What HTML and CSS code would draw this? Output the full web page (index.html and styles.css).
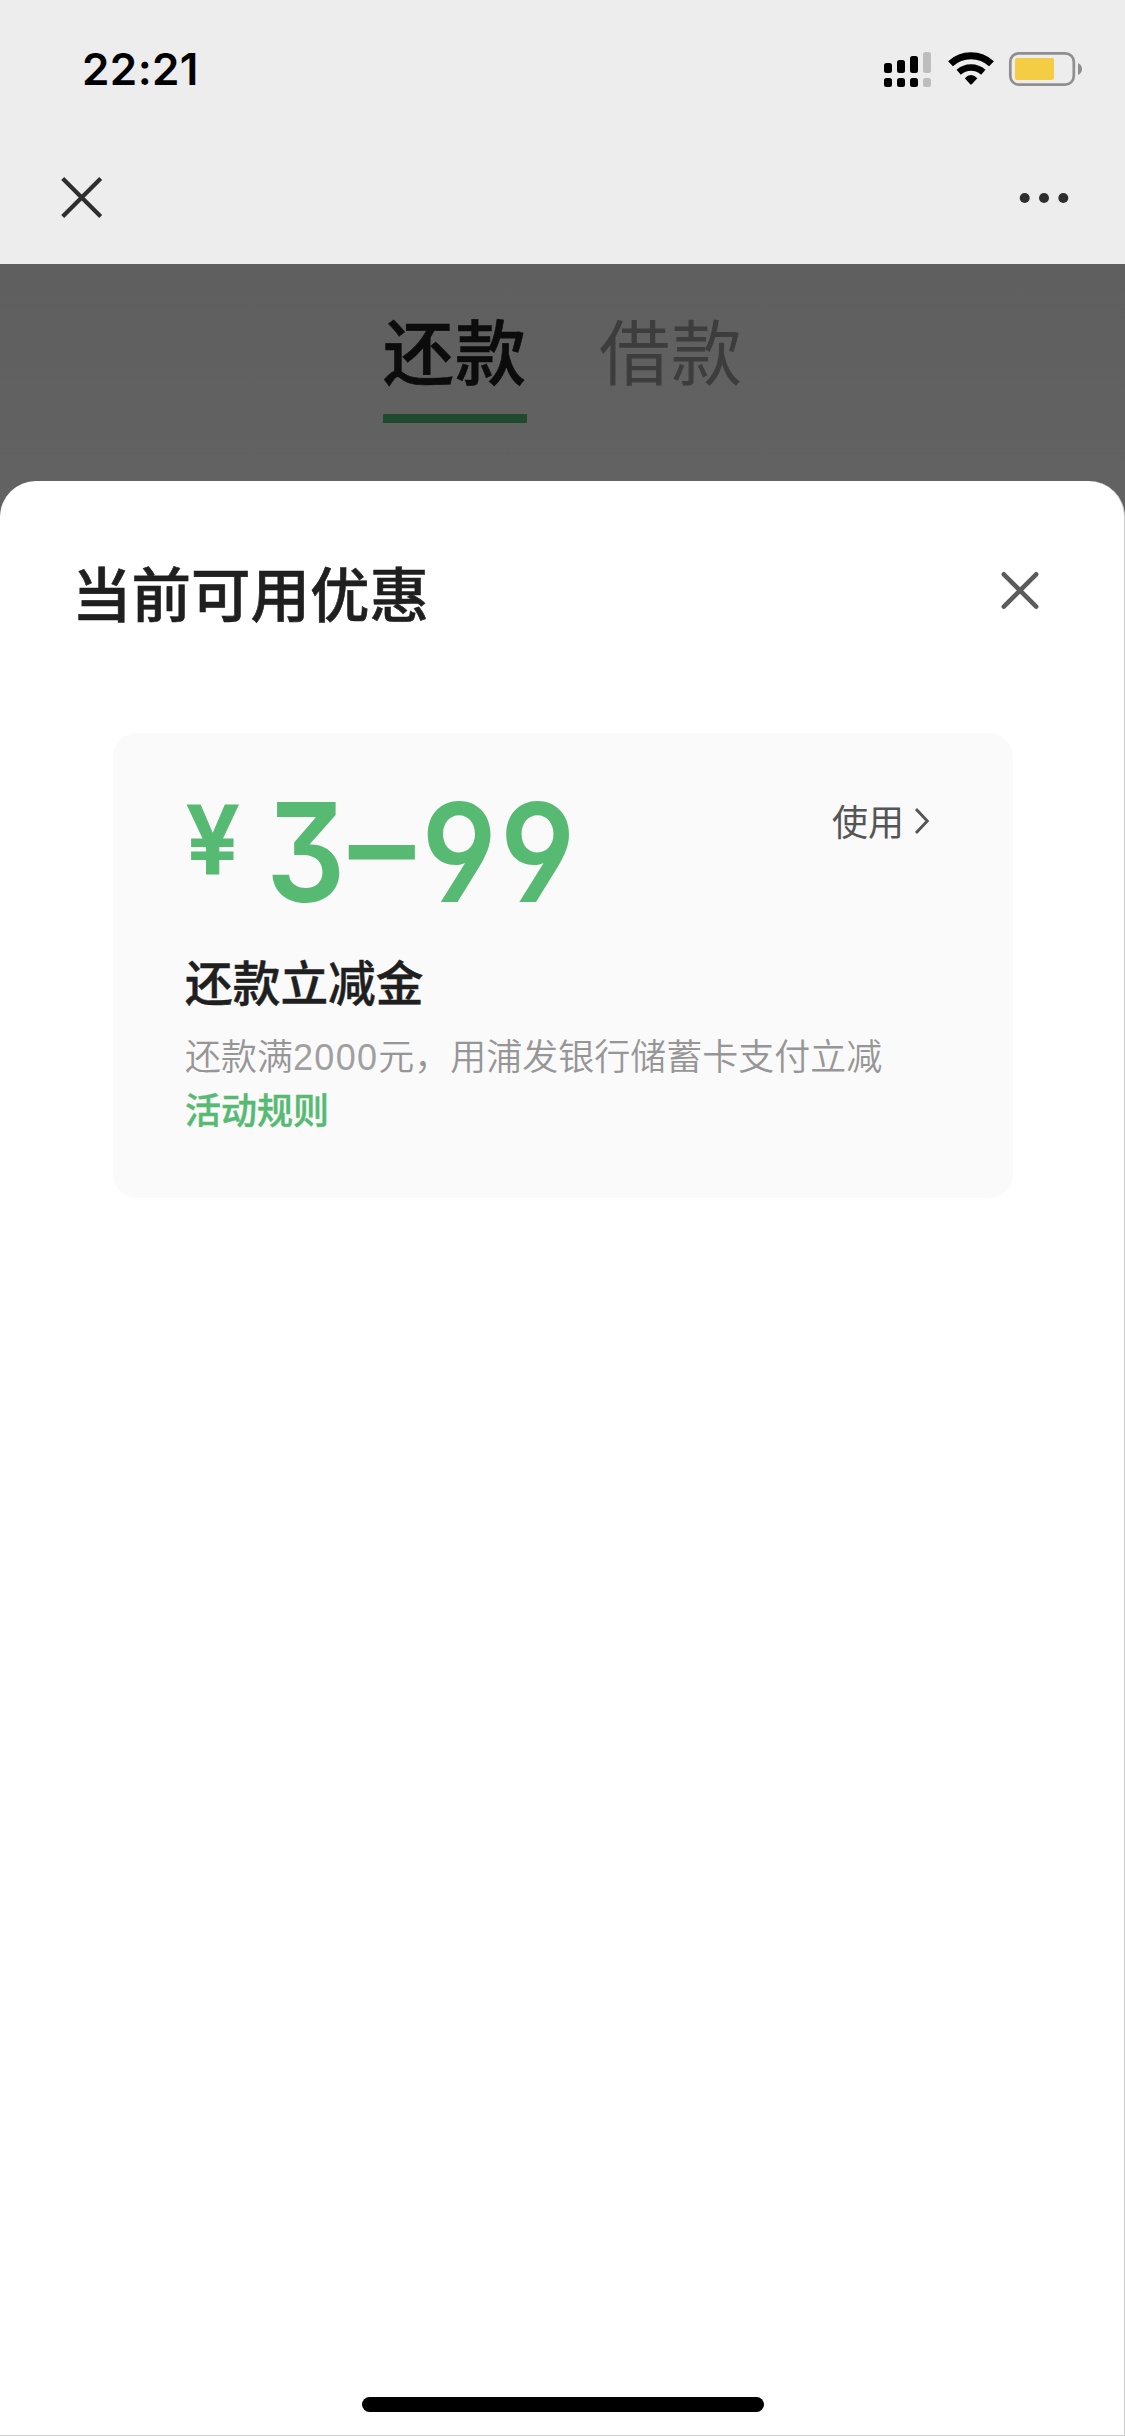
FILE: index.html
```html
<!DOCTYPE html>
<html lang="zh-CN">
<head>
<meta charset="utf-8">
<title>当前可用优惠</title>
<link rel="stylesheet" href="styles.css">
</head>
<body>
<div class="screen">
  <header class="status-bar">
    <span class="time">22:21</span>
    <svg class="status-icons" width="202" height="40" viewBox="882 50 202 40">
      <g>
        <rect x="884" y="63" width="8" height="10" rx="2.5"/>
        <rect x="897" y="60" width="8" height="13" rx="2.5"/>
        <rect x="910" y="56" width="8" height="17" rx="2.5"/>
        <rect x="884" y="78" width="8" height="9" rx="2.5"/>
        <rect x="897" y="78" width="8" height="9" rx="2.5"/>
        <rect x="910" y="78" width="8" height="9" rx="2.5"/>
        <rect x="923" y="52" width="8" height="21" rx="2.5" fill="#bdbdbd"/>
        <rect x="923" y="78" width="8" height="9" rx="2.5" fill="#bdbdbd"/>
      </g>
      <g fill="none" stroke="#000" stroke-linejoin="round">
        <path d="M950.5 63.8A30 30 0 0 1 991.5 63.8" stroke-width="7"/>
        <path d="M958.700 72.200A18.500 18.500 0 0 1 983.300 72.200" stroke-width="6.500"/>
      </g>
      <path d="M964.800 78.200Q971 72 977.300 78.200L971.800 84.200Q971 85 970.200 84.200Z"/>
      <rect x="1010.300" y="53.300" width="63.500" height="31.300" rx="8.500" fill="none" stroke="#8f8f8f" stroke-width="2.700"/>
      <rect x="1015" y="58" width="39" height="22" rx="2" fill="#f5cd45"/>
      <path d="M1078 63Q1082 65 1082 69T1078 75Z" fill="#8f8f8f"/>
    </svg>
  </header>
  <nav class="title-bar">
    <svg width="44" height="44" viewBox="0 0 44 44" fill="none" stroke="#2e2e2e" stroke-width="4.200"><path d="M2.700 2.400L40.700 40.400M40.700 2.400L2.700 40.400"/></svg>
    <svg width="50" height="12" viewBox="0 0 50 12" fill="#2e2e2e"><circle cx="5.700" cy="6" r="5"/><circle cx="25" cy="6" r="5"/><circle cx="44.300" cy="6" r="5"/></svg>
  </nav>
  <main class="page">
    <div class="tabs">
      <span class="tab tab-active">还款</span>
      <span class="tab">借款</span>
    </div>
    <section class="sheet">
      <div class="sheet-head">
        <h1>当前可用优惠</h1>
        <svg width="40" height="40" viewBox="0 0 40 40" fill="none" stroke="#5b5b5b" stroke-width="4.600" stroke-linecap="round"><path d="M3.800 3.300L36.200 35.700M36.200 3.300L3.800 35.700"/></svg>
      </div>
      <article class="coupon">
        <div class="coupon-top">
          <div class="amount"><span class="currency">¥</span><span class="value">3<span class="dash">–</span>99</span></div>
          <a class="use">使用<svg width="16" height="28" viewBox="0 0 16 28" fill="none" stroke="#555" stroke-width="2.900"><path d="M2 3L13.300 15L2 27"/></svg></a>
        </div>
        <h2>还款立减金</h2>
        <p class="desc">还款满<span class="num">2000</span>元，用浦发银行储蓄卡支付立减</p>
        <a class="rules">活动规则</a>
      </article>
      <div class="home-indicator"></div>
    </section>
  </main>
</div>
</body>
</html>
```
FILE: styles.css
```css
* { box-sizing: border-box; }

body {
  margin: 0;
  font-family: "Noto Sans CJK SC", sans-serif;
  color: #1f1f1f;
}

h1, h2, p { margin: 0; font-weight: 500; }
svg { display: block; flex: none; }

.screen {
  display: flex;
  flex-direction: column;
  width: 1125px;
  height: 2436px;
  background: #ededed;
}

.status-bar {
  display: flex;
  justify-content: space-between;
  height: 132px;
  padding: 0 41px 0 82px;
}

.time {
  margin-top: 43px;
  font: 600 44px/52px Inter, sans-serif;
  letter-spacing: .4px;
  color: #000;
}

.status-icons { margin-top: 50px; }

.title-bar {
  display: flex;
  justify-content: space-between;
  align-items: center;
  height: 132px;
  padding: 0 56px 0 60px;
}

.page {
  display: flex;
  flex-direction: column;
  flex: 1;
  background: linear-gradient(#5f5f5f, #626262 220px);
}

.tabs {
  display: flex;
  justify-content: center;
  gap: 72px;
  height: 217px;
  padding: 34px 0 0 1px;
}

.tab {
  width: 144px;
  height: 125px;
  font-size: 71px;
  letter-spacing: 1px;
  line-height: 100px;
  color: #3d3d3d;
}

.tab-active {
  font-weight: 500;
  color: #0c0c0c;
  -webkit-text-stroke: .6px #0c0c0c;
  border-bottom: 9px solid #1f4a2e;
}

.sheet {
  display: flex;
  flex-direction: column;
  flex: 1;
  background: #fff;
  border-right: 1px solid #ccc;
  border-bottom: 1px solid #ccc;
  border-radius: 36px 36px 0 0;
}

.sheet-head {
  display: flex;
  justify-content: space-between;
  align-items: center;
  height: 220px;
  padding: 0 84px 0 72px;
}

.sheet-head h1 {
  font-size: 59.500px;
  line-height: 80px;
  -webkit-text-stroke: .6px #1f1f1f;
}

.coupon {
  display: flex;
  flex-direction: column;
  width: 900px;
  height: 465px;
  margin: 32px 0 0 113px;
  padding: 60px 83px 0 72px;
  background: #fafafa;
  border-radius: 24px;
}

.coupon-top {
  display: flex;
  justify-content: space-between;
  height: 157px;
}

.amount {
  display: flex;
  font-family: Inter, sans-serif;
  font-weight: 600;
  color: #57ba73;
}

.currency {
  width: 81px;
  padding-left: 1px;
  font-size: 95px;
  line-height: 93px;
  -webkit-text-stroke: 1px #57ba73;
}

.value {
  font-size: 137px;
  line-height: 119px;
  letter-spacing: 3.500px;
  white-space: nowrap;
  font-feature-settings: "cv09", "cv04";
  transform: scaleX(.91);
  transform-origin: left;
}

.dash {
  display: inline-block;
  margin-right: 8px;
  transform: translateY(-8px) scaleX(1.06);
  transform-origin: left;
}

.use {
  display: flex;
  align-items: center;
  gap: 10px;
  height: 54px;
  font-size: 36px;
  line-height: 54px;
  color: #555;
}

.coupon h2 {
  font-size: 47.700px;
  line-height: 62px;
  -webkit-text-stroke: .5px #1f1f1f;
}

.desc {
  margin-top: 15px;
  font-size: 36px;
  font-weight: 350;
  line-height: 54px;
  color: #969696;
  white-space: nowrap;
}

.num {
  font-family: "Liberation Sans", sans-serif;
  letter-spacing: 1.300px;
  color: #a0a0a0;
}

.rules {
  margin-top: -4px;
  font-size: 36px;
  font-weight: 500;
  line-height: 54px;
  color: #57ba73;
  -webkit-text-stroke: .4px #57ba73;
}

.home-indicator {
  width: 402px;
  height: 15px;
  margin: auto auto 23px 362px;
  background: #000;
  border-radius: 8px;
}
```
